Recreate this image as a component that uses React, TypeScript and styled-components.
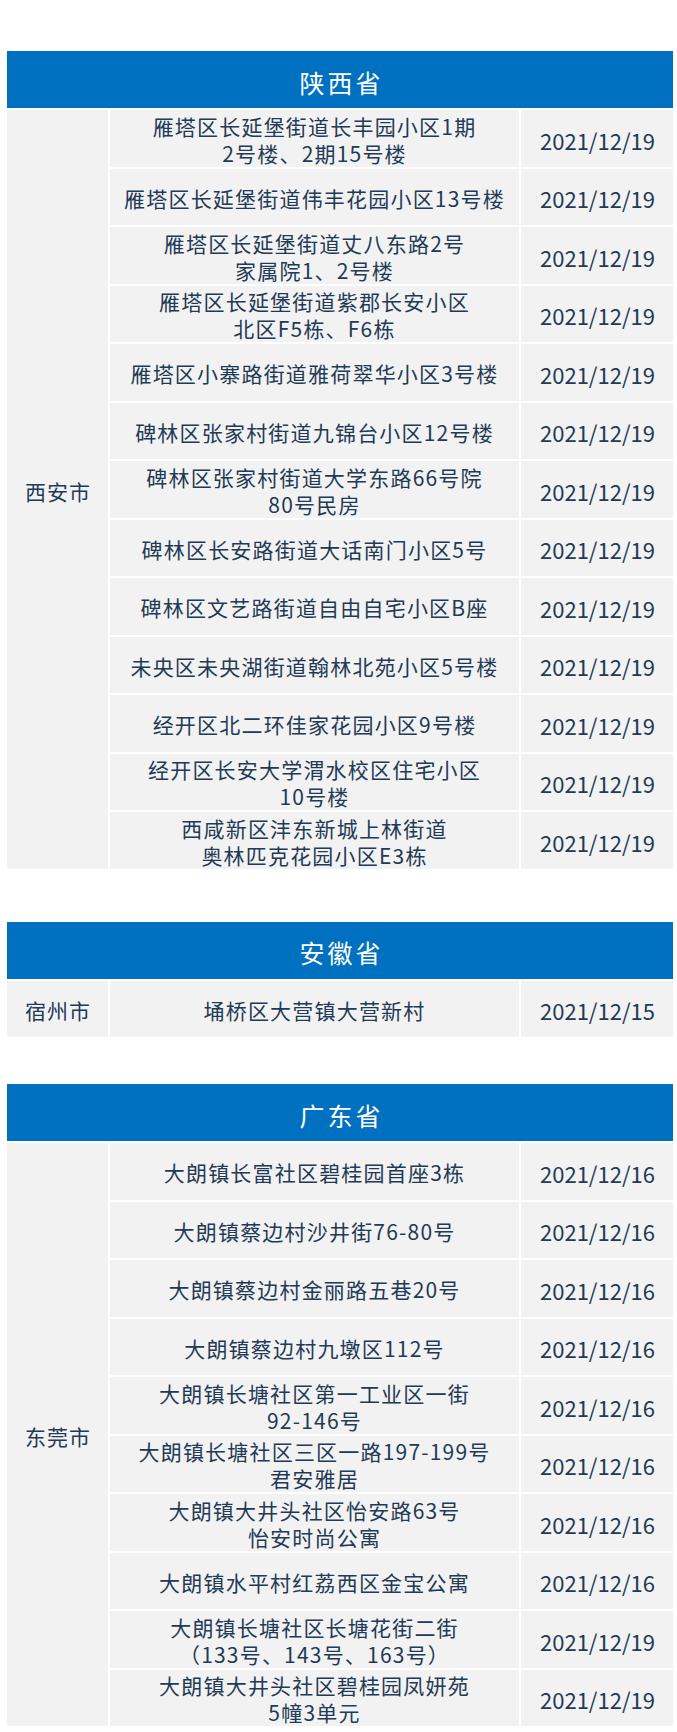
import React from "react";
import styled, { createGlobalStyle } from "styled-components";

const GlobalStyle = createGlobalStyle`
  html, body {
    margin: 0;
    padding: 0;
    background: #ffffff;
  }
  body {
    font-family: "Noto Sans CJK SC", "Noto Sans", sans-serif;
    color: #233a56;
  }
`;

const Page = styled.div`
  width: 677px;
  padding: 0 4px 0 7px;
  box-sizing: border-box;
`;

const Section = styled.section<{ $top: number }>`
  margin-top: ${(p) => p.$top}px;
`;

const ProvinceHeader = styled.div`
  height: 57px;
  background: #0070c0;
  color: #ffffff;
  display: flex;
  align-items: center;
  justify-content: center;
  padding: 4px 0 0 3px;
  box-sizing: border-box;
  font-size: 25px;
  letter-spacing: 3px;
`;

const Grid = styled.div`
  display: grid;
  grid-template-columns: 101px 1fr 152px;
  grid-auto-rows: 56.5px;
  gap: 2px;
  margin-top: 2px;
`;

const Cell = styled.div`
  background: #f2f2f2;
  display: flex;
  align-items: center;
  justify-content: center;
  text-align: center;
  box-sizing: border-box;
  padding-top: 3px;
`;

const CityCell = styled(Cell)<{ $span: number }>`
  grid-column: 1;
  grid-row: span ${(p) => p.$span};
  font-size: 21px;
  letter-spacing: 1px;
  padding-left: 1px;
`;

const AddressCell = styled(Cell)`
  grid-column: 2;
  font-size: 21px;
  letter-spacing: 1.2px;
  line-height: 27px;
`;

const DateCell = styled(Cell)`
  grid-column: 3;
  font-size: 22px;
  padding-left: 1px;
`;

interface Place {
  address: string[];
  date: string;
}

interface ProvinceData {
  province: string;
  city: string;
  top: number;
  places: Place[];
}

const p = (address: string, date: string): Place => ({ address: address.split("|"), date });

const provinces: ProvinceData[] = [
  {
    province: "陕西省",
    city: "西安市",
    top: 51,
    places: [
      p("雁塔区长延堡街道长丰园小区1期|2号楼、2期15号楼", "2021/12/19"),
      p("雁塔区长延堡街道伟丰花园小区13号楼", "2021/12/19"),
      p("雁塔区长延堡街道丈八东路2号|家属院1、2号楼", "2021/12/19"),
      p("雁塔区长延堡街道紫郡长安小区|北区F5栋、F6栋", "2021/12/19"),
      p("雁塔区小寨路街道雅荷翠华小区3号楼", "2021/12/19"),
      p("碑林区张家村街道九锦台小区12号楼", "2021/12/19"),
      p("碑林区张家村街道大学东路66号院|80号民房", "2021/12/19"),
      p("碑林区长安路街道大话南门小区5号", "2021/12/19"),
      p("碑林区文艺路街道自由自宅小区B座", "2021/12/19"),
      p("未央区未央湖街道翰林北苑小区5号楼", "2021/12/19"),
      p("经开区北二环佳家花园小区9号楼", "2021/12/19"),
      p("经开区长安大学渭水校区住宅小区|10号楼", "2021/12/19"),
      p("西咸新区沣东新城上林街道|奥林匹克花园小区E3栋", "2021/12/19"),
    ],
  },
  {
    province: "安徽省",
    city: "宿州市",
    top: 53,
    places: [p("埇桥区大营镇大营新村", "2021/12/15")],
  },
  {
    province: "广东省",
    city: "东莞市",
    top: 47,
    places: [
      p("大朗镇长富社区碧桂园首座3栋", "2021/12/16"),
      p("大朗镇蔡边村沙井街76-80号", "2021/12/16"),
      p("大朗镇蔡边村金丽路五巷20号", "2021/12/16"),
      p("大朗镇蔡边村九墩区112号", "2021/12/16"),
      p("大朗镇长塘社区第一工业区一街|92-146号", "2021/12/16"),
      p("大朗镇长塘社区三区一路197-199号|君安雅居", "2021/12/16"),
      p("大朗镇大井头社区怡安路63号|怡安时尚公寓", "2021/12/16"),
      p("大朗镇水平村红荔西区金宝公寓", "2021/12/16"),
      p("大朗镇长塘社区长塘花街二街|（133号、143号、163号）", "2021/12/19"),
      p("大朗镇大井头社区碧桂园凤妍苑|5幢3单元", "2021/12/19"),
    ],
  },
];

const ProvinceTable = ({ data }: { data: ProvinceData }) => (
  <Section $top={data.top}>
    <ProvinceHeader>{data.province}</ProvinceHeader>
    <Grid>
      <CityCell $span={data.places.length}>{data.city}</CityCell>
      {data.places.map((place, index) => (
        <React.Fragment key={index}>
          <AddressCell>
            <div>
              {place.address.map((line, i) => (
                <div key={i}>{line}</div>
              ))}
            </div>
          </AddressCell>
          <DateCell>{place.date}</DateCell>
        </React.Fragment>
      ))}
    </Grid>
  </Section>
);

export default function App() {
  return (
    <Page>
      <GlobalStyle />
      {provinces.map((data) => (
        <ProvinceTable key={data.province} data={data} />
      ))}
    </Page>
  );
}
